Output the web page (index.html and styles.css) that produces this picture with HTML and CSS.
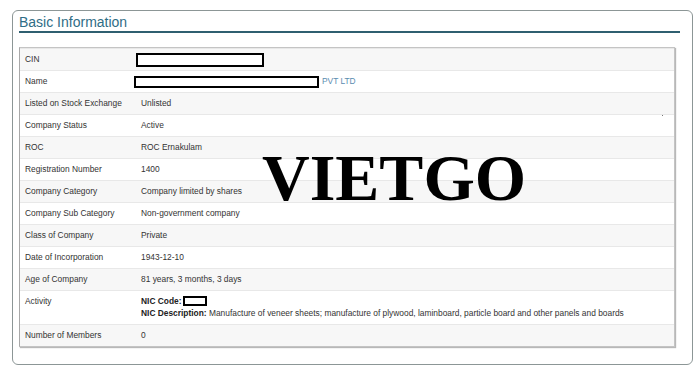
FILE: index.html
```html
<!DOCTYPE html>
<html>
<head>
<meta charset="utf-8">
<link rel="stylesheet" href="styles.css">
</head>
<body>
<div class="panel">
  <h2 class="title">Basic Information</h2>
  <div class="table">
    <div class="row"><div class="cell">CIN</div><div class="cell"><span class="redact cin"></span></div></div>
    <div class="row"><div class="cell">Name</div><div class="cell"><span class="redact name"></span><span class="link">PVT LTD</span></div></div>
    <div class="row"><div class="cell">Listed on Stock Exchange</div><div class="cell">Unlisted</div></div>
    <div class="row"><div class="cell">Company Status</div><div class="cell">Active</div></div>
    <div class="row"><div class="cell">ROC</div><div class="cell">ROC Ernakulam</div></div>
    <div class="row"><div class="cell">Registration Number</div><div class="cell">1400</div></div>
    <div class="row"><div class="cell">Company Category</div><div class="cell">Company limited by shares</div></div>
    <div class="row"><div class="cell">Company Sub Category</div><div class="cell">Non-government company</div></div>
    <div class="row"><div class="cell">Class of Company</div><div class="cell">Private</div></div>
    <div class="row"><div class="cell">Date of Incorporation</div><div class="cell">1943-12-10</div></div>
    <div class="row"><div class="cell">Age of Company</div><div class="cell">81 years, 3 months, 3 days</div></div>
    <div class="row"><div class="cell">Activity</div><div class="cell"><b>NIC Code:</b><span class="redact nic"></span><br><b>NIC Description:</b> Manufacture of veneer sheets; manufacture of plywood, laminboard, particle board and other panels and boards</div></div>
    <div class="row"><div class="cell">Number of Members</div><div class="cell">0</div></div>
  </div>
</div>
<span class="dot"></span>
<div class="watermark">VIETGO</div>
</body>
</html>
```
FILE: styles.css
```css
body {
  margin: 0;
  background: #fff;
  font-family: "Liberation Sans", Arial, sans-serif;
}
.panel {
  box-sizing: border-box;
  margin: 10px 0 0 12px;
  width: 681px;
  height: 355px;
  border: 1px solid #8c9696;
  border-radius: 6px;
  padding: 3px 0 0 6px;
}
.title {
  margin: 0 12px 0 0;
  font-size: 14px;
  line-height: 17px;
  font-weight: normal;
  color: #2f6d86;
  border-bottom: 2px solid #2f5f70;
}
.table {
  box-sizing: border-box;
  margin-top: 14px;
  width: 656px;
  border: 1px solid #c4c4c4;
  border-left-color: #a8a8a8;
  box-shadow: 1px 1px 1px #b8b8b8;
}
.row {
  display: grid;
  grid-template-columns: 116px 1fr;
  border-top: 1px solid #e8e8e8;
}
.row:nth-child(odd) {
  background: #f7f7f7;
}
.cell {
  padding: 4px 5px 5px;
  font-size: 8.4px;
  line-height: 12px;
  color: #333;
}
.cell b {
  font-weight: bold;
  color: #222;
}
.redact {
  display: inline-block;
  box-sizing: border-box;
  border: 2px solid #000;
  background: #fff;
  vertical-align: top;
}
.cin {
  width: 128px;
  height: 14px;
  margin: 0 0 -2px -5px;
}
.name {
  width: 185px;
  height: 12px;
  margin: 1px 0 -1px -7px;
}
.link {
  margin-left: 3px;
  color: #5a8cb0;
}
.nic {
  width: 24px;
  height: 10px;
  margin: 1px 0 -1px 2px;
}
.dot {
  position: absolute;
  left: 662px;
  top: 115px;
  width: 1px;
  height: 1px;
  background: #777;
}
.watermark {
  position: absolute;
  left: 262px;
  top: 145px;
  font-family: "Liberation Serif", "Times New Roman", serif;
  font-weight: bold;
  font-size: 66px;
  line-height: 66px;
  color: #000;
}
```
